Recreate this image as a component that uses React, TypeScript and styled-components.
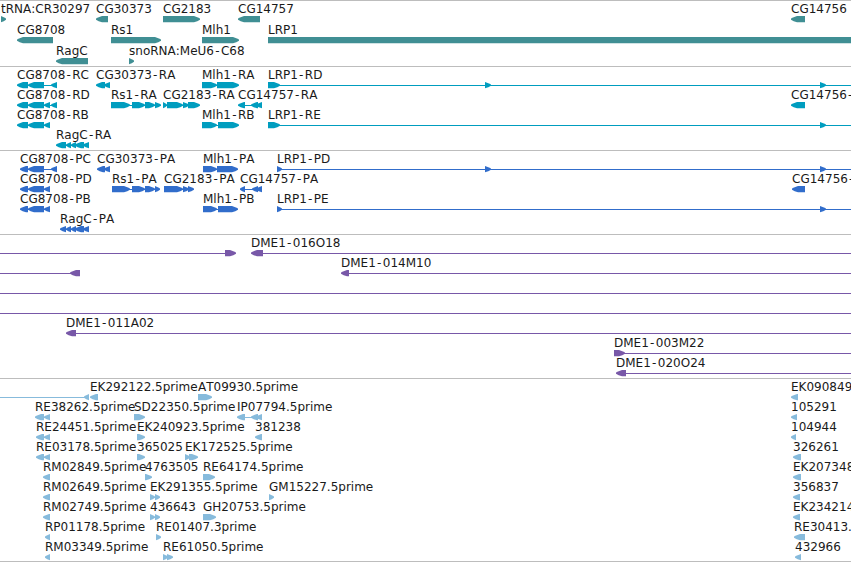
import React from "react";
import styled, { createGlobalStyle } from "styled-components";

const GlobalStyle = createGlobalStyle`
  html, body { margin: 0; background: #fff; overflow: hidden; }
`;

const VIEW_WIDTH = 851;

const Browser = styled.main`
  display: flex;
  flex-direction: column;
  width: ${VIEW_WIDTH}px;
  height: 562px;
  overflow: hidden;
  background: #fff;
  border-bottom: 1px solid #bdbdbd;
  box-sizing: border-box;
`;

const Track = styled.section<{ $height: number; $color: string }>`
  display: flex;
  flex-direction: column;
  flex: none;
  box-sizing: border-box;
  height: ${(p) => p.$height}px;
  border-top: 1px solid #bdbdbd;
  color: ${(p) => p.$color};
`;

const Lane = styled.svg<{ $height: number }>`
  display: block;
  flex: none;
  width: ${VIEW_WIDTH}px;
  height: ${(p) => p.$height}px;
  overflow: visible;
`;

const Label = styled.text`
  font: 12px "DejaVu Sans", sans-serif;
  font-kerning: none;
  fill: #1a1a1a;
  white-space: pre;
`;

const Glyph = styled.path`
  fill: currentColor;
`;

const Intron = styled.rect`
  fill: currentColor;
  shape-rendering: crispEdges;
`;

type Block = [number, number];
interface Feature {
  name?: string;
  dir: "f" | "r";
  blocks: Block[];
  span?: Block;
}

const f = (name: string, ...blocks: Block[]): Feature => ({ name, dir: "f", blocks });
const r = (name: string, ...blocks: Block[]): Feature => ({ name, dir: "r", blocks });
const spanning = (feature: Feature, from: number, to: number): Feature => ({
  ...feature,
  span: [from, to],
});

interface TrackData {
  color: string;
  height: number;
  laneHeight: number;
  lanes: Feature[][];
}

const tracks: TrackData[] = [
  {
    color: "#408f94",
    height: 66,
    laneHeight: 21,
    lanes: [
      [
        f("tRNA:CR30297", [1, 6]),
        r("CG30373", [96, 108]),
        f("CG2183", [163, 200]),
        r("CG14757", [238, 260]),
        r("CG14756", [791, 805]),
      ],
      [
        r("CG8708", [17, 53]),
        f("Rs1", [111, 161]),
        f("Mlh1", [202, 239]),
        f("LRP1", [268, 870]),
      ],
      [r("RagC", [56, 88]), f("snoRNA:MeU6-C68", [129, 134])],
    ],
  },
  {
    color: "#009dbf",
    height: 84,
    laneHeight: 20,
    lanes: [
      [
        r("CG8708-RC", [17, 28], [28, 44], [51, 57]),
        r("CG30373-RA", [96, 105], [104, 110]),
        f("Mlh1-RA", [202, 217], [217, 239]),
        spanning(f("LRP1-RD", [268, 280], [485, 491], [820, 826]), 268, 851),
      ],
      [
        r("CG8708-RD", [17, 28], [28, 44], [44, 50], [51, 57]),
        f("Rs1-RA", [111, 130], [132, 145], [145, 155], [155, 161]),
        f("CG2183-RA", [163, 167], [167, 183], [183, 189], [188, 200]),
        r("CG14757-RA", [238, 245], [251, 258], [256, 262]),
        r("CG14756-RA", [791, 805]),
      ],
      [
        r("CG8708-RB", [17, 28], [28, 44], [44, 50]),
        f("Mlh1-RB", [202, 217], [218, 239]),
        spanning(f("LRP1-RE", [268, 280], [820, 826]), 268, 851),
      ],
      [r("RagC-RA", [56, 66], [66, 71], [71, 76], [75, 84], [83, 89])],
    ],
  },
  {
    color: "#316dcb",
    height: 84,
    laneHeight: 20,
    lanes: [
      [
        r("CG8708-PC", [20, 28], [28, 44], [51, 57]),
        r("CG30373-PA", [97, 105], [104, 110]),
        f("Mlh1-PA", [203, 217], [217, 238]),
        spanning(f("LRP1-PD", [277, 282], [485, 491], [820, 826]), 277, 851),
      ],
      [
        r("CG8708-PD", [20, 28], [28, 44], [44, 50]),
        f("Rs1-PA", [112, 130], [132, 145], [145, 155], [155, 160]),
        f("CG2183-PA", [164, 183], [183, 189], [188, 194]),
        r("CG14757-PA", [240, 245], [252, 258], [256, 262]),
        r("CG14756-PA", [792, 805]),
      ],
      [
        r("CG8708-PB", [20, 28], [28, 44], [44, 50]),
        f("Mlh1-PB", [203, 217], [218, 238]),
        spanning(f("LRP1-PE", [277, 282], [820, 826]), 277, 851),
      ],
      [r("RagC-PA", [60, 66], [66, 71], [71, 76], [75, 84], [83, 89])],
    ],
  },
  {
    color: "#7858a8",
    height: 144,
    laneHeight: 20,
    lanes: [
      [
        { dir: "f", blocks: [[225, 236]], span: [0, 236] },
        spanning(r("DME1-016O18", [251, 263]), 251, 851),
      ],
      [
        { dir: "r", blocks: [[70, 80]], span: [0, 80] },
        spanning(r("DME1-014M10", [341, 349]), 341, 851),
      ],
      [{ dir: "f", blocks: [], span: [0, 851] }],
      [{ dir: "f", blocks: [], span: [0, 851] }],
      [spanning(r("DME1-011A02", [66, 76]), 66, 851)],
      [spanning(f("DME1-003M22", [614, 625]), 614, 851)],
      [spanning(r("DME1-020O24", [616, 626]), 616, 851)],
    ],
  },
  {
    color: "#87bbdc",
    height: 183,
    laneHeight: 20,
    lanes: [
      [
        { dir: "r", blocks: [[84, 89]], span: [0, 89] },
        r("EK292122.5prime", [90, 98]),
        f("AT09930.5prime", [198, 212]),
        r("EK090849.5prime", [791, 798]),
      ],
      [
        r("RE38262.5prime", [35, 44], [44, 50]),
        f("SD22350.5prime", [134, 145]),
        r("IP07794.5prime", [237, 245], [251, 258], [256, 262]),
        r("105291", [791, 797]),
      ],
      [
        r("RE24451.5prime", [36, 44], [44, 50]),
        f("EK240923.5prime", [137, 145]),
        r("381238", [255, 262]),
        r("104944", [791, 796]),
      ],
      [
        r("RE03178.5prime", [36, 44], [44, 50]),
        f("365025", [137, 145]),
        f("EK172525.5prime", [185, 190], [189, 198]),
        r("326261", [793, 801]),
      ],
      [
        r("RM02849.5prime", [43, 50]),
        f("4763505", [145, 152]),
        f("RE64174.5prime", [203, 215]),
        r("EK207348.5prime", [793, 801]),
      ],
      [
        r("RM02649.5prime", [43, 50]),
        f("EK291355.5prime", [150, 155], [155, 160]),
        f("GM15227.5prime", [269, 274]),
        r("356837", [793, 800]),
      ],
      [
        r("RM02749.5prime", [43, 50]),
        f("436643", [150, 155], [155, 160]),
        f("GH20753.5prime", [203, 216]),
        r("EK234214.5prime", [793, 800]),
      ],
      [
        r("RP01178.5prime", [45, 50]),
        f("RE01407.3prime", [156, 161]),
        r("RE30413.5prime", [794, 805]),
      ],
      [
        r("RM03349.5prime", [45, 50]),
        f("RE61050.5prime", [163, 168], [167, 173]),
        r("432966", [795, 801]),
      ],
    ],
  },
];

const arrow = ([start, end]: Block, dir: "f" | "r") => {
  const head = Math.min(6, end - start);
  const sign = dir === "f" ? 1 : -1;
  const tail = dir === "f" ? start : end;
  const tip = dir === "f" ? end : start;
  const neck = tip - sign * head;
  const shoulder = tip - sign * head * 0.45;
  return `M${tail} 15H${neck}L${shoulder} 16.2L${tip} 17.5V18.8L${shoulder} 20.2L${neck} 21.3H${tail}Z`;
};

// Extra room around the hyphen keeps the two parts of a name apart.
const hyphenGaps = (name: string) =>
  name.includes("-")
    ? [...name].map((c, i) => (c === "-" ? 1.2 : name[i - 1] === "-" ? 1.4 : 0)).join(" ")
    : undefined;

function FeatureGlyph({ feature }: { feature: Feature }) {
  const { name, dir, blocks, span } = feature;
  const from = span ? span[0] : blocks[0][0];
  const to = span ? span[1] : blocks[blocks.length - 1][1];
  const bodyFrom = dir === "r" && from > 0 ? from + 2 : from;
  const bodyTo = dir === "f" && to < VIEW_WIDTH ? to - 2 : to;
  return (
    <g>
      <Intron x={bodyFrom} y={18} width={bodyTo - bodyFrom} height={1} />
      {blocks.map((block, i) => (
        <Glyph key={i} d={arrow(block, dir)} />
      ))}
      {name && (
        <Label x={from} y={12} dx={hyphenGaps(name)}>
          {name}
        </Label>
      )}
    </g>
  );
}

export default function App() {
  return (
    <>
      <GlobalStyle />
      <Browser>
        {tracks.map((track, t) => (
          <Track key={t} $height={track.height} $color={track.color}>
            {track.lanes.map((lane, l) => (
              <Lane key={l} $height={track.laneHeight}>
                {lane.map((feature, i) => (
                  <FeatureGlyph key={i} feature={feature} />
                ))}
              </Lane>
            ))}
          </Track>
        ))}
      </Browser>
    </>
  );
}
